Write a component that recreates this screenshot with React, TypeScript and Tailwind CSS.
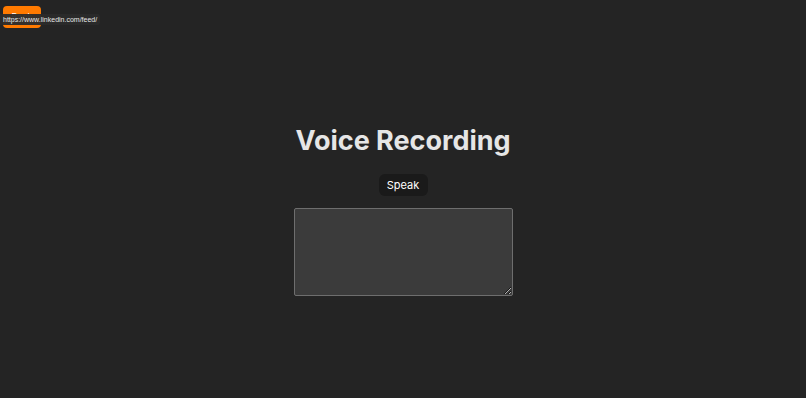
export default function App() {
  return (
    <div className="relative min-h-[398px] w-full bg-[#242424] font-['Inter','Liberation_Sans',sans-serif] text-[#e8e8e8]">
      <div className="px-[3px] pt-[6px]">
        <button className="block h-[22px] w-[38px] rounded-[4px] bg-[#ff7a00] text-[9px] text-white">Back</button>
      </div>
      <div className="absolute left-0 top-[14px] rounded-r-[3px] bg-[#2b2b2b]/95 px-[3px] py-[1px] font-['Liberation_Sans',sans-serif] text-[7px] leading-[9px] text-[#e8e8e8]">
        https://www.linkedin.com/feed/
      </div>
      <div className="flex flex-col items-center pt-[95px]">
        <h1 className="text-[27px] font-bold leading-[36px] text-[#e6e6e6]">Voice Recording</h1>
        <button className="mt-[15px] h-[22px] w-[49px] rounded-[6px] bg-[#1a1a1a] text-[11px] text-white">Speak</button>
        <textarea className="mt-[12px] h-[88px] w-[219px] rounded-[2px] border border-[#6e6e6e] bg-[#3b3b3b] text-[#e8e8e8] outline-none" />
      </div>
    </div>
  );
}
